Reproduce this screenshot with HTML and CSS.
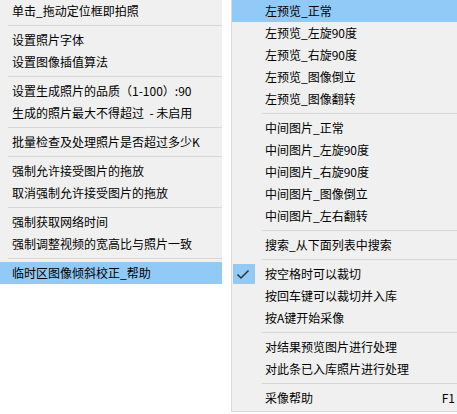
FILE: index.html
```html
<!DOCTYPE html>
<html>
<head>
<meta charset="utf-8">
<link rel="stylesheet" href="styles.css">
</head>
<body>
<div class="page">
  <div class="menu left">
    <div class="item">单击_拖动定位框即拍照</div>
    <div class="sep"></div>
    <div class="item">设置照片字体</div>
    <div class="item">设置图像插值算法</div>
    <div class="sep"></div>
    <div class="item">设置生成照片的品质（1-100）:90</div>
    <div class="item">生成的照片最大不得超过&nbsp; - 未启用</div>
    <div class="sep"></div>
    <div class="item">批量检查及处理照片是否超过多少K</div>
    <div class="sep"></div>
    <div class="item">强制允许接受图片的拖放</div>
    <div class="item">取消强制允许接受图片的拖放</div>
    <div class="sep"></div>
    <div class="item">强制获取网络时间</div>
    <div class="item">强制调整视频的宽高比与照片一致</div>
    <div class="sep"></div>
    <div class="item active">临时区图像倾斜校正_帮助</div>
  </div>
  <div class="menu right">
    <div class="item active"><span class="mark"></span><span class="label">左预览_正常</span></div>
    <div class="item"><span class="mark"></span><span class="label">左预览_左旋90度</span></div>
    <div class="item"><span class="mark"></span><span class="label">左预览_右旋90度</span></div>
    <div class="item"><span class="mark"></span><span class="label">左预览_图像倒立</span></div>
    <div class="item"><span class="mark"></span><span class="label">左预览_图像翻转</span></div>
    <div class="sep"></div>
    <div class="item"><span class="mark"></span><span class="label">中间图片_正常</span></div>
    <div class="item"><span class="mark"></span><span class="label">中间图片_左旋90度</span></div>
    <div class="item"><span class="mark"></span><span class="label">中间图片_右旋90度</span></div>
    <div class="item"><span class="mark"></span><span class="label">中间图片_图像倒立</span></div>
    <div class="item"><span class="mark"></span><span class="label">中间图片_左右翻转</span></div>
    <div class="sep"></div>
    <div class="item"><span class="mark"></span><span class="label">搜索_从下面列表中搜索</span></div>
    <div class="sep"></div>
    <div class="item"><span class="mark checked"><svg width="22" height="20" viewBox="0 0 22 20"><polyline points="4.5,10.5 8,14 15.5,6.5" fill="none" stroke="#333" stroke-width="1.5"/></svg></span><span class="label">按空格时可以裁切</span></div>
    <div class="item"><span class="mark"></span><span class="label">按回车键可以裁切并入库</span></div>
    <div class="item"><span class="mark"></span><span class="label">按A键开始采像</span></div>
    <div class="sep"></div>
    <div class="item"><span class="mark"></span><span class="label">对结果预览图片进行处理</span></div>
    <div class="item"><span class="mark"></span><span class="label">对此条已入库照片进行处理</span></div>
    <div class="sep"></div>
    <div class="item"><span class="mark"></span><span class="label">采像帮助</span><span class="key">F1</span></div>
  </div>
</div>
</body>
</html>
```

FILE: styles.css
```css
html, body {
  margin: 0;
  padding: 0;
  background: #ffffff;
}
body {
  font-family: "Noto Sans CJK SC", "Microsoft YaHei", sans-serif;
  font-size: 12px;
  color: #000;
}
.page {
  display: flex;
  align-items: flex-start;
  width: 457px;
  height: 414px;
  overflow: hidden;
}
.menu {
  background: #f0f0f0;
  display: flex;
  flex-direction: column;
}
.left {
  width: 222px;
}
.right {
  margin-left: 9px;
  width: 225px;
  border-left: 1px solid #dadada;
  border-bottom: 1px solid #dadada;
  padding-bottom: 2px;
}
.item {
  height: 22px;
  line-height: 22px;
  white-space: nowrap;
  display: flex;
  align-items: center;
}
.left .item {
  padding-left: 12px;
}
.item.active {
  background: #91c9f7;
}
.sep {
  height: 7px;
  display: flex;
  align-items: center;
}
.sep::after {
  content: "";
  display: block;
  height: 1px;
  width: 100%;
  background: #d7d7d7;
}
.left .sep {
  padding-left: 8px;
}
.right .sep {
  padding-left: 30px;
}
.mark {
  width: 22px;
  height: 20px;
  margin-left: 1px;
  margin-right: 10px;
  flex: none;
  display: flex;
}
.mark.checked {
  background: #91c9f7;
}
.label {
  flex: 1;
}
.key {
  padding-right: 2px;
}
```
